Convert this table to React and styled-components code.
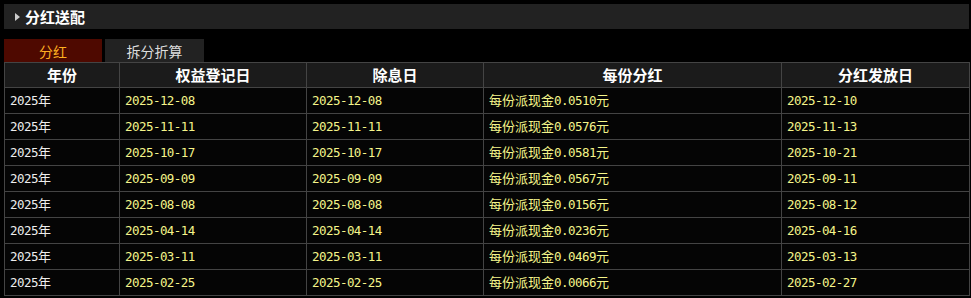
import React from 'react'
import styled, { createGlobalStyle } from 'styled-components'

const GlobalStyle = createGlobalStyle`
    html, body {
        margin: 0;
        padding: 0;
        background: #000;
    }
`;

const Page = styled.div`
    width: 971px;
    height: 298px;
    padding: 4px 2px 0 4px;
    box-sizing: border-box;
    background: #000;
    font-family: "Noto Sans CJK SC", sans-serif;
`;

const TitleBar = styled.div`
    height: 25px;
    background: #222;
    display: flex;
    align-items: center;
    padding-left: 11px;
    gap: 5px;
    margin-bottom: 10px;
`;

const Arrow = styled.span`
    width: 0;
    height: 0;
    border-top: 4px solid transparent;
    border-bottom: 4px solid transparent;
    border-left: 5px solid #ccc;
`;

const Title = styled.span`
    color: #fff;
    font-size: 15px;
    font-weight: bold;
    line-height: 25px;
`;

const Tabs = styled.div`
    display: flex;
    gap: 3px;
    height: 23px;
`;

const Tab = styled.div`
    width: ${p => p.$w}px;
    display: flex;
    align-items: center;
    justify-content: center;
    font-size: 14px;
    background: ${p => (p.$active ? '#4e0900' : '#222')};
    color: ${p => (p.$active ? '#ffb020' : '#ddd')};
`;

const Table = styled.table`
    width: 965px;
    border-collapse: collapse;
    table-layout: fixed;
`;

const Th = styled.th`
    height: 24px;
    padding: 0;
    border: 1px solid #444;
    background: #1b1b1b;
    color: #fff;
    font-size: 15px;
    font-weight: bold;
    text-align: center;
    line-height: 16px;
`;

const Td = styled.td`
    height: 25px;
    padding: 0 0 0 5px;
    border: 1px solid #444;
    background: #050505;
    color: ${p => (p.$white ? '#eee' : '#f5f58a')};
    font-size: 13px;
    line-height: 16px;
    white-space: nowrap;
    vertical-align: middle;
`;

const Num = styled.span`
    font-family: "DejaVu Sans Mono", monospace;
    font-size: 12.5px;
    letter-spacing: -0.55px;
`;

const rows = [
    ['2025-12-08', '2025-12-08', '0.0510', '2025-12-10'],
    ['2025-11-11', '2025-11-11', '0.0576', '2025-11-13'],
    ['2025-10-17', '2025-10-17', '0.0581', '2025-10-21'],
    ['2025-09-09', '2025-09-09', '0.0567', '2025-09-11'],
    ['2025-08-08', '2025-08-08', '0.0156', '2025-08-12'],
    ['2025-04-14', '2025-04-14', '0.0236', '2025-04-16'],
    ['2025-03-11', '2025-03-11', '0.0469', '2025-03-13'],
    ['2025-02-25', '2025-02-25', '0.0066', '2025-02-27'],
];

function App() {
    return (
        <Page>
            <GlobalStyle />
            <TitleBar>
                <Arrow />
                <Title>分红送配</Title>
            </TitleBar>
            <Tabs>
                <Tab $active $w={98}>分红</Tab>
                <Tab $w={99}>拆分折算</Tab>
            </Tabs>
            <Table>
                <colgroup>
                    <col style={{ width: 115 }} />
                    <col style={{ width: 187 }} />
                    <col style={{ width: 177 }} />
                    <col style={{ width: 298 }} />
                    <col style={{ width: 188 }} />
                </colgroup>
                <thead>
                    <tr>
                        <Th>年份</Th>
                        <Th>权益登记日</Th>
                        <Th>除息日</Th>
                        <Th>每份分红</Th>
                        <Th>分红发放日</Th>
                    </tr>
                </thead>
                <tbody>
                    {rows.map(r => (
                        <tr key={r[0]}>
                            <Td $white><Num>2025</Num>年</Td>
                            <Td><Num>{r[0]}</Num></Td>
                            <Td><Num>{r[1]}</Num></Td>
                            <Td>每份派现金<Num>{r[2]}</Num>元</Td>
                            <Td><Num>{r[3]}</Num></Td>
                        </tr>
                    ))}
                </tbody>
            </Table>
        </Page>
    )
}

export default App
